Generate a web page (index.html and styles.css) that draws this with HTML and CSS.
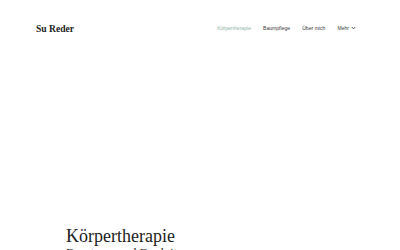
FILE: index.html
```html
<!DOCTYPE html>
<html lang="de">
<head>
<meta charset="utf-8">
<title>Su Reder</title>
<link rel="stylesheet" href="styles.css">
</head>
<body>
<header class="header">
  <div class="logo">Su Reder</div>
  <nav class="nav">
    <a class="nav-link active" href="#">Körpertherapie</a>
    <a class="nav-link" href="#">Baumpflege</a>
    <a class="nav-link" href="#">Über mich</a>
    <a class="nav-link more" href="#">Mehr
      <svg class="chev" width="5" height="4" viewBox="0 0 5 4"><path d="M0.8 1 L2.5 2.8 L4.2 1" fill="none" stroke="#444" stroke-width="0.9"/></svg>
    </a>
  </nav>
</header>
<main class="hero">
  <h1 class="title">Körpertherapie</h1>
  <p class="subtitle">Beratung und Begleitung</p>
</main>
</body>
</html>
```
FILE: styles.css
```css
html, body {
  margin: 0;
  padding: 0;
  background: #fff;
  overflow: hidden;
}
body {
  width: 400px;
  height: 250px;
  font-family: "Liberation Serif", serif;
}
.header {
  display: flex;
  align-items: center;
  justify-content: space-between;
  padding: 21px 44px 0 36px;
  height: 14px;
}
.logo {
  font-family: "Liberation Serif", serif;
  font-weight: bold;
  font-size: 9.6px;
  color: #222;
}
.nav {
  display: flex;
  align-items: center;
  gap: 12px;
  font-family: "Liberation Sans", sans-serif;
  font-size: 5.1px;
}
.nav-link {
  color: #3a3a3a;
  text-decoration: none;
}
.nav-link.active {
  color: #8fb3a8;
}
.more {
  display: flex;
  align-items: center;
  gap: 2px;
}
.hero {
  padding: 192px 0 0 66px;
}
.title {
  margin: 0;
  font-family: "Liberation Serif", serif;
  font-weight: normal;
  font-size: 18px;
  line-height: 18px;
  color: #222;
}
.subtitle {
  margin: 0;
  font-family: "Liberation Serif", serif;
  font-size: 13px;
  line-height: 15px;
  color: #333;
}
```
